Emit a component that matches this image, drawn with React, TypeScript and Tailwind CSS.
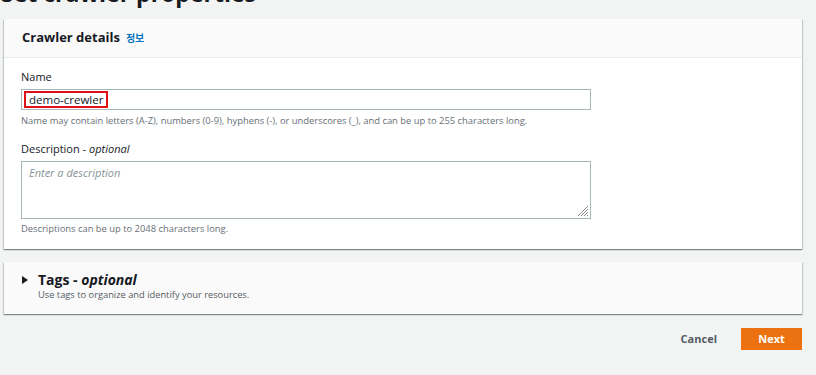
export default function App() {
  return (
    <div
      className="w-[816px] h-[375px] overflow-hidden bg-[#f2f3f3] text-[#16191f]"
      style={{ fontFamily: '"Open Sans", "Noto Sans CJK KR", sans-serif' }}
    >
      {/* Page heading, scrolled mostly out of view */}
      <h1 className="mt-[-21px] ml-[1px] h-[40px] text-[23px] font-bold leading-[28px] text-[#16191f]">
        Set crawler properties
      </h1>

      {/* Crawler details card */}
      <section className="ml-[4px] w-[798px] bg-white shadow-[0_1px_1px_0_rgba(0,28,36,0.3),1px_1px_1px_0_rgba(0,28,36,0.15),-1px_1px_1px_0_rgba(0,28,36,0.15)]">
        <div className="flex h-[39px] items-center gap-[6px] border-b border-[#eaeded] bg-[#fafafa] px-[18px]">
          <h2 className="text-[13px] font-bold">Crawler details</h2>
          <a className="text-[10px] font-bold text-[#0073bb]">정보</a>
        </div>
        <div className="px-[17px] pt-[11px] pb-[13px]">
          <label className="block text-[11px] leading-[16px]">Name</label>
          <div className="mt-[4px] flex h-[21px] w-[570px] items-center border border-[#aab7b8] px-[2px]">
            <span className="border-2 border-[#e0101a] px-[3px] text-[11.5px] leading-[13px]">
              demo-crewler
            </span>
          </div>
          <p className="mt-[4px] text-[9.4px] leading-[14px] text-[#687078]">
            Name may contain letters (A-Z), numbers (0-9), hyphens (-), or underscores (_), and can be up to 255 characters long.
          </p>
          <label className="mt-[13px] block text-[11px] leading-[16px]">
            Description - <i>optional</i>
          </label>
          <div className="relative mt-[4px] h-[58px] w-[570px] border border-[#aab7b8] px-[7px] pt-[1px] leading-[16px]">
            <span className="text-[11px] italic leading-[16px] text-[#879596]">Enter a description</span>
            <svg className="absolute right-[1px] bottom-[1px]" width="12" height="12" viewBox="0 0 12 12">
              <path d="M11 1L1 11M11 4L4 11M11 7L7 11M11 10L10 11" stroke="#888" strokeWidth="1" />
            </svg>
          </div>
          <p className="mt-[3px] text-[9.4px] leading-[14px] text-[#687078]">
            Descriptions can be up to 2048 characters long.
          </p>
        </div>
      </section>

      {/* Tags card */}
      <section className="mt-[13px] ml-[4px] flex h-[52px] w-[798px] items-start gap-[10px] bg-[#fafafa] px-[18px] pt-[9px] shadow-[0_1px_1px_0_rgba(0,28,36,0.3),1px_1px_1px_0_rgba(0,28,36,0.15),-1px_1px_1px_0_rgba(0,28,36,0.15)]">
        <svg className="mt-[5px]" width="6" height="8" viewBox="0 0 6 8">
          <path d="M0 0L6 4L0 8Z" fill="#16191f" />
        </svg>
        <div>
          <h2 className="text-[14px] font-bold leading-[17px]">
            Tags - <i>optional</i>
          </h2>
          <p className="text-[9.3px] leading-[14px] text-[#545b64]">
            Use tags to organize and identify your resources.
          </p>
        </div>
      </section>

      {/* Actions */}
      <div className="mt-[14px] ml-[4px] flex w-[798px] items-center justify-end gap-[24px]">
        <button className="text-[11px] font-bold text-[#545b64]">Cancel</button>
        <button className="h-[22px] w-[61px] bg-[#ec7211] text-[11px] font-bold text-white">Next</button>
      </div>
    </div>
  );
}
